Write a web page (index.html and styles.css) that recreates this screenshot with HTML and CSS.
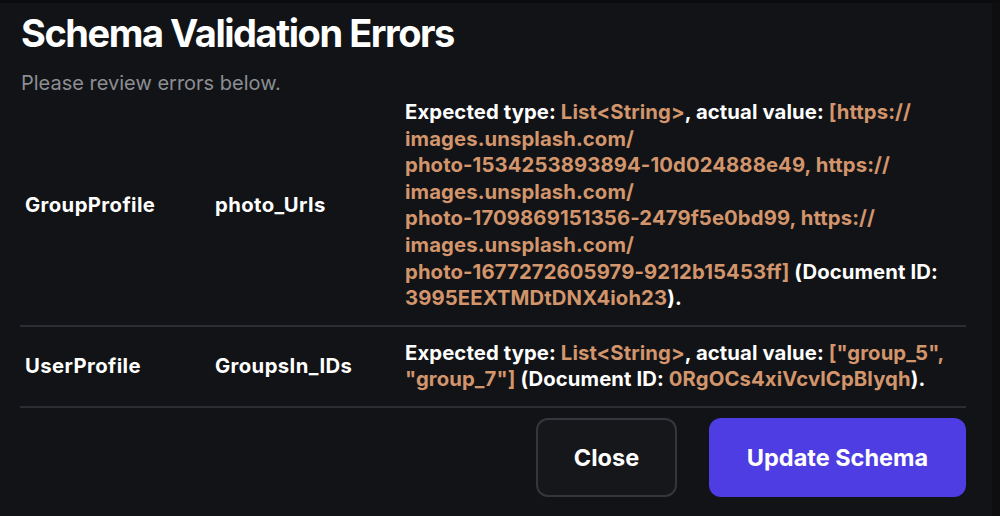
FILE: index.html
```html
<!DOCTYPE html>
<html lang="en">
<head>
<meta charset="utf-8">
<title>Schema Validation Errors</title>
<link rel="stylesheet" href="styles.css">
</head>
<body>
<div class="dialog">
  <h1 class="title">Schema Validation Errors</h1>
  <p class="subtitle">Please review errors below.</p>
  <table class="errors">
    <colgroup>
      <col class="col-coll">
      <col class="col-field">
      <col class="col-msg">
    </colgroup>
    <tbody>
      <tr>
        <td class="cell name">GroupProfile</td>
        <td class="cell name">photo_Urls</td>
        <td class="cell msg">Expected type: <span class="val">List&lt;String&gt;</span>, actual value: <span class="val">[https://<br>images.unsplash.com/<br>photo-1534253893894-10d024888e49, https://<br>images.unsplash.com/<br>photo-1709869151356-2479f5e0bd99, https://<br>images.unsplash.com/<br>photo-1677272605979-9212b15453ff]</span> (Document ID:<br><span class="val">3995EEXTMDtDNX4ioh23</span>).</td>
      </tr>
      <tr>
        <td class="cell name">UserProfile</td>
        <td class="cell name">GroupsIn_IDs</td>
        <td class="cell msg">Expected type: <span class="val">List&lt;String&gt;</span>, actual value: <span class="val">["group_5",<br>"group_7"]</span> (Document ID: <span class="val">0RgOCs4xiVcvlCpBlyqh</span>).</td>
      </tr>
    </tbody>
  </table>
  <div class="actions">
    <button class="btn btn-close" type="button">Close</button>
    <button class="btn btn-primary" type="button">Update Schema</button>
  </div>
</div>
</body>
</html>
```
FILE: styles.css
```css
html, body {
  margin: 0;
  padding: 0;
  height: 100%;
}
body {
  background: #121316;
  font-family: Inter, "Liberation Sans", sans-serif;
  color: #ffffff;
  border-top: 3px solid #0b0c0e;
  border-right: 8px solid #0e0e10;
  box-sizing: border-box;
}
.dialog {
  padding: 8px 26px 0 21px;
}
.title {
  margin: 0;
  font-size: 38px;
  line-height: 44px;
  font-weight: 700;
  letter-spacing: -1.45px;
}
.subtitle {
  margin: 18px 0 0;
  font-size: 20px;
  line-height: 20px;
  color: #8b8e93;
  font-weight: 400;
}
.errors {
  margin: -7px 0 0 -1px;
  width: 946px;
  border-collapse: collapse;
  table-layout: fixed;
}
.col-coll { width: 190px; }
.col-field { width: 190px; }
.col-msg { width: 566px; }
.errors tr {
  border-bottom: 2px solid #2c2d32;
}
.cell {
  padding: 13px 0 13px 5px;
  vertical-align: middle;
  font-weight: 700;
  font-size: 20.3px;
  line-height: 26.6px;
  letter-spacing: 0.1px;
  color: #ffffff;
}
.cell.name {
  letter-spacing: 0.4px;
}
.msg .val {
  color: #d2956c;
}
.actions {
  display: flex;
  justify-content: flex-end;
  gap: 32px;
  margin-top: 10px;
}
.btn {
  height: 79px;
  border-radius: 12px;
  font-family: Inter, "Liberation Sans", sans-serif;
  font-size: 23.5px;
  font-weight: 700;
  color: #ffffff;
  padding: 0 30px;
  cursor: pointer;
}
.btn-close {
  background: #16171a;
  border: 2px solid #35363b;
  width: 141px;
}
.btn-primary {
  background: #4d3de3;
  border: none;
  width: 257px;
}
```
